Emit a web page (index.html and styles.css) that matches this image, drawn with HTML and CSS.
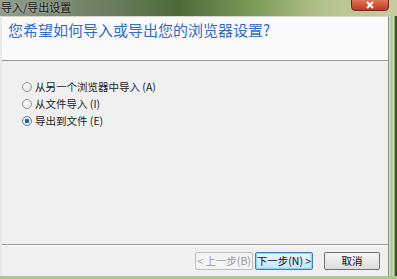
FILE: index.html
```html
<!DOCTYPE html>
<html>
<head>
<meta charset="utf-8">
<link rel="stylesheet" href="styles.css">
</head>
<body>
<div class="screen">
  <div class="titlebar">
    <span class="title">导入/导出设置</span>
    <span class="close"><svg width="10" height="8" viewBox="0 0 10 8"><path d="M2 1 L8 7 M8 1 L2 7" stroke="#fff" stroke-width="2"/></svg></span>
  </div>
  <div class="main">
    <div class="window">
      <div class="header">您希望如何导入或导出您的浏览器设置?</div>
      <div class="body">
        <label class="opt"><span class="radio"></span>从另一个浏览器中导入 (A)</label>
        <label class="opt"><span class="radio"></span>从文件导入 (I)</label>
        <label class="opt"><span class="radio checked"></span>导出到文件 (E)</label>
      </div>
      <div class="footer">
        <span class="btn disabled">&lt; 上一步(B)</span>
        <span class="btn focus">下一步(N) &gt;</span>
        <span class="btn cancel">取消</span>
      </div>
    </div>
    <div class="rightframe"></div>
  </div>
  <div class="bottomframe"></div>
</div>
</body>
</html>
```
FILE: styles.css
```css
html, body { margin: 0; padding: 0; }
body { width: 397px; height: 279px; overflow: hidden; font-family: "Noto Sans CJK SC", "Liberation Sans", sans-serif; }
.screen { width: 397px; height: 279px; display: flex; flex-direction: column; background: #9fbf86; }
.titlebar {
  height: 16px; flex: none; position: relative;
  background: linear-gradient(90deg, #8e9c8a 0%, #6f7f63 25%, #4e6a3a 45%, #7f9d5c 65%, #b7c38f 82%, #c9caa0 100%);
}
.title { position: absolute; left: 1px; top: 0; font-size: 11px; line-height: 14px; color: #111; text-shadow: 0 0 3px rgba(255,255,255,0.6); }
.close {
  position: absolute; right: 8px; top: -2px; width: 36px; height: 11px;
  background: linear-gradient(#e07a60, #c03a20); border: 1px solid #6a2a20; border-radius: 0 0 4px 4px;
  display: flex; align-items: center; justify-content: center;
}
.main { flex: 1; display: flex; min-height: 0; }
.window { flex: 1; display: flex; flex-direction: column; border-left: 2px solid #e8e8e8; border-top: 1px solid #d8d8d0; border-right: 1px solid #8c8c8c; background: #f0f0f0; }
.rightframe { width: 8px; flex: none; background: linear-gradient(90deg, #d8e8c8 0, #a8c890 30%, #cfe0b8 55%, #88a878 70%, #3e4e3c 80%, #3e4e3c 100%); }
.bottomframe { height: 3px; flex: none; background: #a8c890; }
.header {
  height: 44px; flex: none; background: #fafafa; border-bottom: 1px solid #9a9a9a;
  box-sizing: border-box; padding: 1px 0 0 6px;
  font-size: 15px; line-height: 24px; color: #2f6cc8;
}
.body { flex: 1; padding: 19px 0 0 20px; display: flex; flex-direction: column; gap: 4px; }
.opt { display: flex; align-items: center; font-size: 10.5px; line-height: 13px; color: #222; gap: 3px; }
.radio {
  width: 10px; height: 10px; border-radius: 50%; box-sizing: border-box;
  border: 1px solid #9a9a9a; background: radial-gradient(circle at 40% 40%, #fff, #dcdcdc);
}
.radio.checked { background: radial-gradient(circle, #2a5ea8 0 2px, #dfeaf6 2.5px); border-color: #6a86a8; }
.footer {
  height: 32px; flex: none; border-top: 1px solid #a0a0a0; box-shadow: inset 0 1px 0 #fff;
  display: flex; align-items: center; justify-content: flex-end; padding: 0 8px 0 0; box-sizing: border-box;
}
.btn {
  height: 18px; box-sizing: border-box; font-size: 10.5px; line-height: 14px; border: 1px solid #707070;
  border-radius: 2px; display: flex; align-items: center; justify-content: center; color: #111;
  background: linear-gradient(#f6f6f6, #dcdcdc);
}
.btn.disabled { width: 58px; color: #9a9a9a; border-color: #bdbdbd; background: #f4f4f4; }
.btn.focus { width: 58px; margin-left: 2px; border-color: #3c7fb1; background: linear-gradient(#eaf6fd, #bee6fd); box-shadow: inset 0 0 0 1px #8fd0f5; }
.btn.cancel { width: 56px; margin-left: 11px; }
```
